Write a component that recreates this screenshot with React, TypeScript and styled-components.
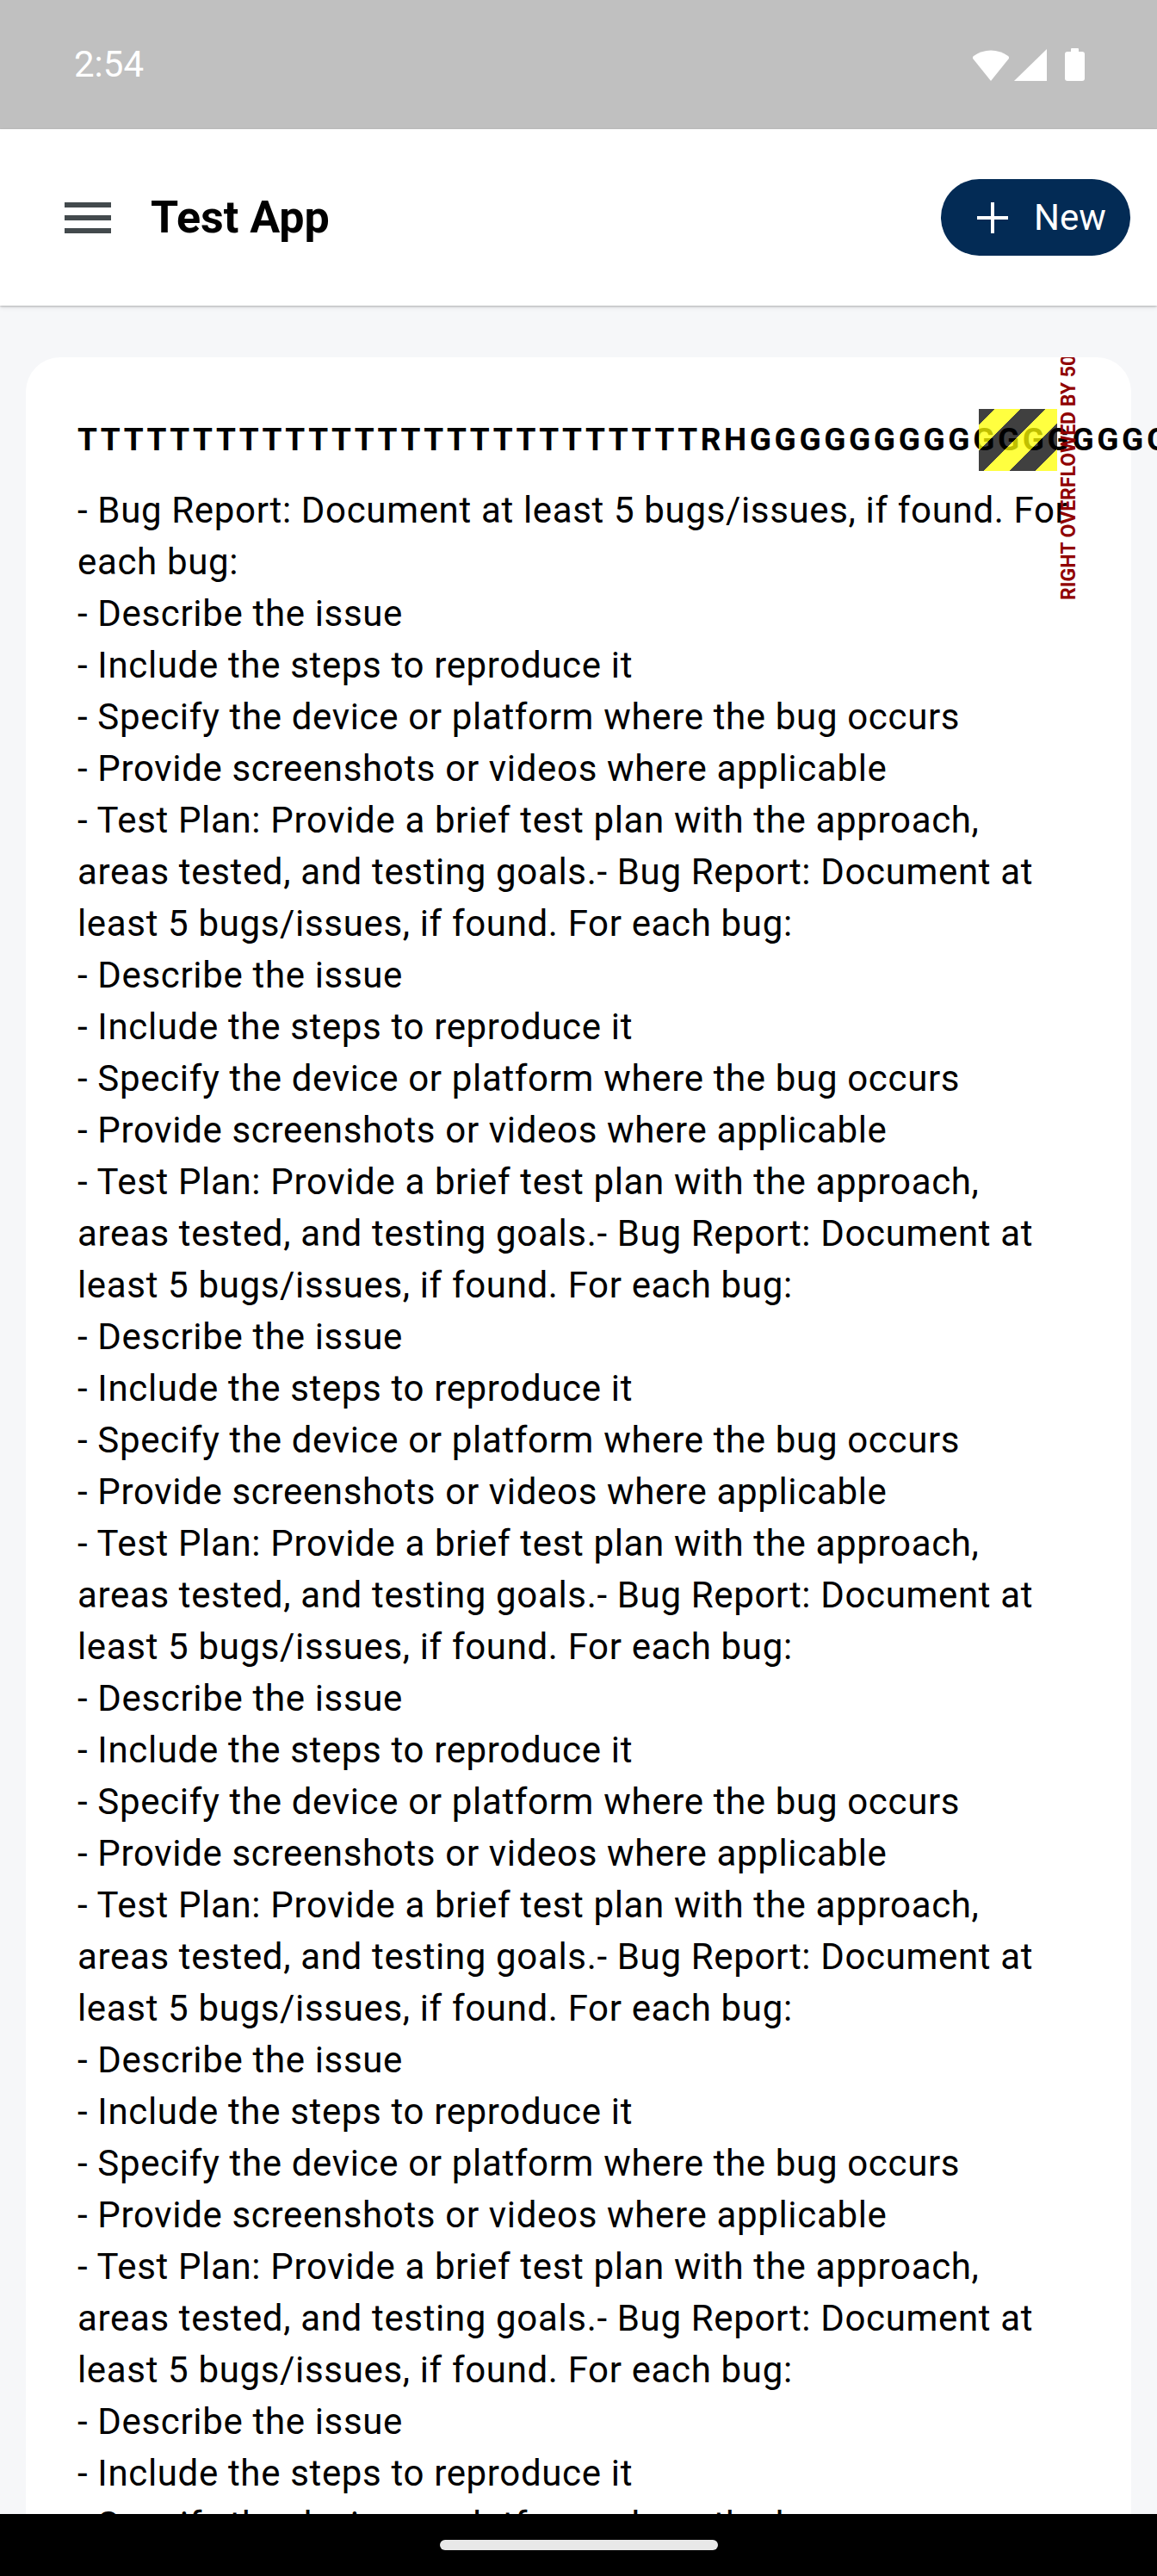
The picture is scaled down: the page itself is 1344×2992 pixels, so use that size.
import React from 'react'
import styled, { createGlobalStyle } from 'styled-components'

const GlobalStyle = createGlobalStyle`
  html, body {
    margin: 0;
    padding: 0;
  }
  body {
    font-family: Roboto, 'Noto Sans', sans-serif;
    background: #f6f7f9;
  }
  * {
    box-sizing: border-box;
  }
`

const Screen = styled.div`
  width: 1344px;
  height: 2992px;
  display: flex;
  flex-direction: column;
  overflow: hidden;
  background: #f6f7f9;
`

const StatusBar = styled.div`
  height: 150px;
  flex-shrink: 0;
  background: #c0c0c0;
  display: flex;
  align-items: center;
  justify-content: space-between;
  padding: 0 84px 0 86px;
  color: #fff;
`

const Clock = styled.div`
  font-size: 42px;
  line-height: 50px;
  font-weight: 400;
`

const StatusIcons = styled.div`
  display: flex;
  align-items: center;
  svg {
    display: block;
    fill: #fff;
  }
  > svg:nth-child(2) {
    margin-left: 5px;
  }
  > svg:nth-child(3) {
    margin-left: 21px;
  }
`

const AppBar = styled.div`
  height: 205px;
  flex-shrink: 0;
  background: #fff;
  display: flex;
  align-items: center;
  padding: 0 31px 0 66px;
  position: relative;
  z-index: 2;
  box-shadow: 0 1px 2px rgba(0, 0, 0, 0.22), 0 2px 5px rgba(0, 0, 0, 0.1);
`

const MenuButton = styled.div`
  width: 72px;
  height: 72px;
  svg {
    display: block;
  }
`

const AppTitle = styled.div`
  margin-left: 37px;
  font-size: 52px;
  font-weight: 700;
  color: #000;
  line-height: 60px;
`

const NewButton = styled.div`
  margin-left: auto;
  width: 220px;
  height: 89px;
  border-radius: 45px;
  background: #032b55;
  color: #fff;
  display: flex;
  align-items: center;
  padding-left: 42px;
  gap: 30px;
  font-size: 42px;
  font-weight: 400;
  svg {
    display: block;
  }
`

const Body = styled.div`
  flex: 1;
  display: flex;
  flex-direction: column;
  padding-top: 60px;
  min-height: 0;
`

const Viewport = styled.div`
  flex: 1;
  overflow: hidden;
  min-height: 0;
`

const Card = styled.div`
  margin: 0 30px;
  background: #fff;
  border-radius: 40px 40px 0 0;
  padding: 60px 60px;
`

const TitleRow = styled.div`
  height: 72px;
  display: flex;
  align-items: center;
  position: relative;
  white-space: nowrap;
`

const RowTitle = styled.div`
  flex-shrink: 0;
  font-size: 37px;
  font-weight: 700;
  letter-spacing: 3.6px;
  line-height: 44px;
  color: #000;
`

const OverflowMarker = styled.div`
  position: absolute;
  top: 0;
  right: 26px;
  width: 91px;
  height: 72px;
  background: repeating-linear-gradient(
    135deg,
    rgba(0, 0, 0, 0.75) 0px,
    rgba(0, 0, 0, 0.75) 13px,
    rgba(255, 255, 0, 0.75) 13px,
    rgba(255, 255, 0, 0.75) 34px,
    rgba(0, 0, 0, 0.75) 34px,
    rgba(0, 0, 0, 0.75) 42px
  );
`

const OverflowLabel = styled.div`
  position: absolute;
  right: 1px;
  bottom: -150px;
  writing-mode: vertical-rl;
  transform: rotate(180deg);
  font-size: 23px;
  font-weight: 700;
  line-height: 22px;
  color: #900000;
  white-space: nowrap;
`

const Description = styled.div`
  margin-top: 16px;
  font-size: 42px;
  line-height: 60px;
  letter-spacing: 0.66px;
  color: #000;
  white-space: pre-wrap;
`

const NavBar = styled.div`
  height: 72px;
  flex-shrink: 0;
  background: #000;
  display: flex;
  align-items: center;
  justify-content: center;
`

const HomePill = styled.div`
  width: 323px;
  height: 12px;
  border-radius: 6px;
  background: #e8e8e8;
`

const block =
  '- Bug Report: Document at least 5 bugs/issues, if found. For each bug:\n' +
  '- Describe the issue\n' +
  '- Include the steps to reproduce it\n' +
  '- Specify the device or platform where the bug occurs\n' +
  '- Provide screenshots or videos where applicable\n' +
  '- Test Plan: Provide a brief test plan with the approach, areas tested, and testing goals.'

const description = Array(8).fill(block).join('')
const title = 'T'.repeat(27) + 'RH' + 'G'.repeat(30)

function App() {
  return (
    <>
      <GlobalStyle />
      <Screen>
        <StatusBar>
          <Clock>2:54</Clock>
          <StatusIcons>
            <svg width="44" height="38" viewBox="0 0 44 38">
              <path d="M22 38 L1.5 12.5 Q0 10.5 2 9 A34 34 0 0 1 42 9 Q44 10.5 42.5 12.5 Z" />
            </svg>
            <svg width="38" height="37" viewBox="0 0 38 37">
              <path d="M38 0 L38 37 L0 37 Z" />
            </svg>
            <svg width="23" height="38" viewBox="0 0 23 38">
              <rect x="7" y="0" width="9" height="5" rx="1" />
              <rect x="0" y="4" width="23" height="34" rx="3" />
            </svg>
          </StatusIcons>
        </StatusBar>
        <AppBar>
          <MenuButton>
            <svg width="72" height="72" viewBox="0 0 24 24" fill="#434a4d">
              <rect x="3" y="6" width="18" height="2" />
              <rect x="3" y="11" width="18" height="2" />
              <rect x="3" y="16" width="18" height="2" />
            </svg>
          </MenuButton>
          <AppTitle>Test App</AppTitle>
          <NewButton>
            <svg width="36" height="36" viewBox="0 0 36 36" stroke="#fff" strokeWidth="4">
              <line x1="18" y1="0" x2="18" y2="36" />
              <line x1="0" y1="18" x2="36" y2="18" />
            </svg>
            New
          </NewButton>
        </AppBar>
        <Body>
          <Viewport>
            <Card>
              <TitleRow>
                <RowTitle>{title}</RowTitle>
                <OverflowMarker />
                <OverflowLabel>RIGHT OVERFLOWED BY 507 PIXELS</OverflowLabel>
              </TitleRow>
              <Description>{description}</Description>
            </Card>
          </Viewport>
        </Body>
        <NavBar>
          <HomePill />
        </NavBar>
      </Screen>
    </>
  )
}

export default App
